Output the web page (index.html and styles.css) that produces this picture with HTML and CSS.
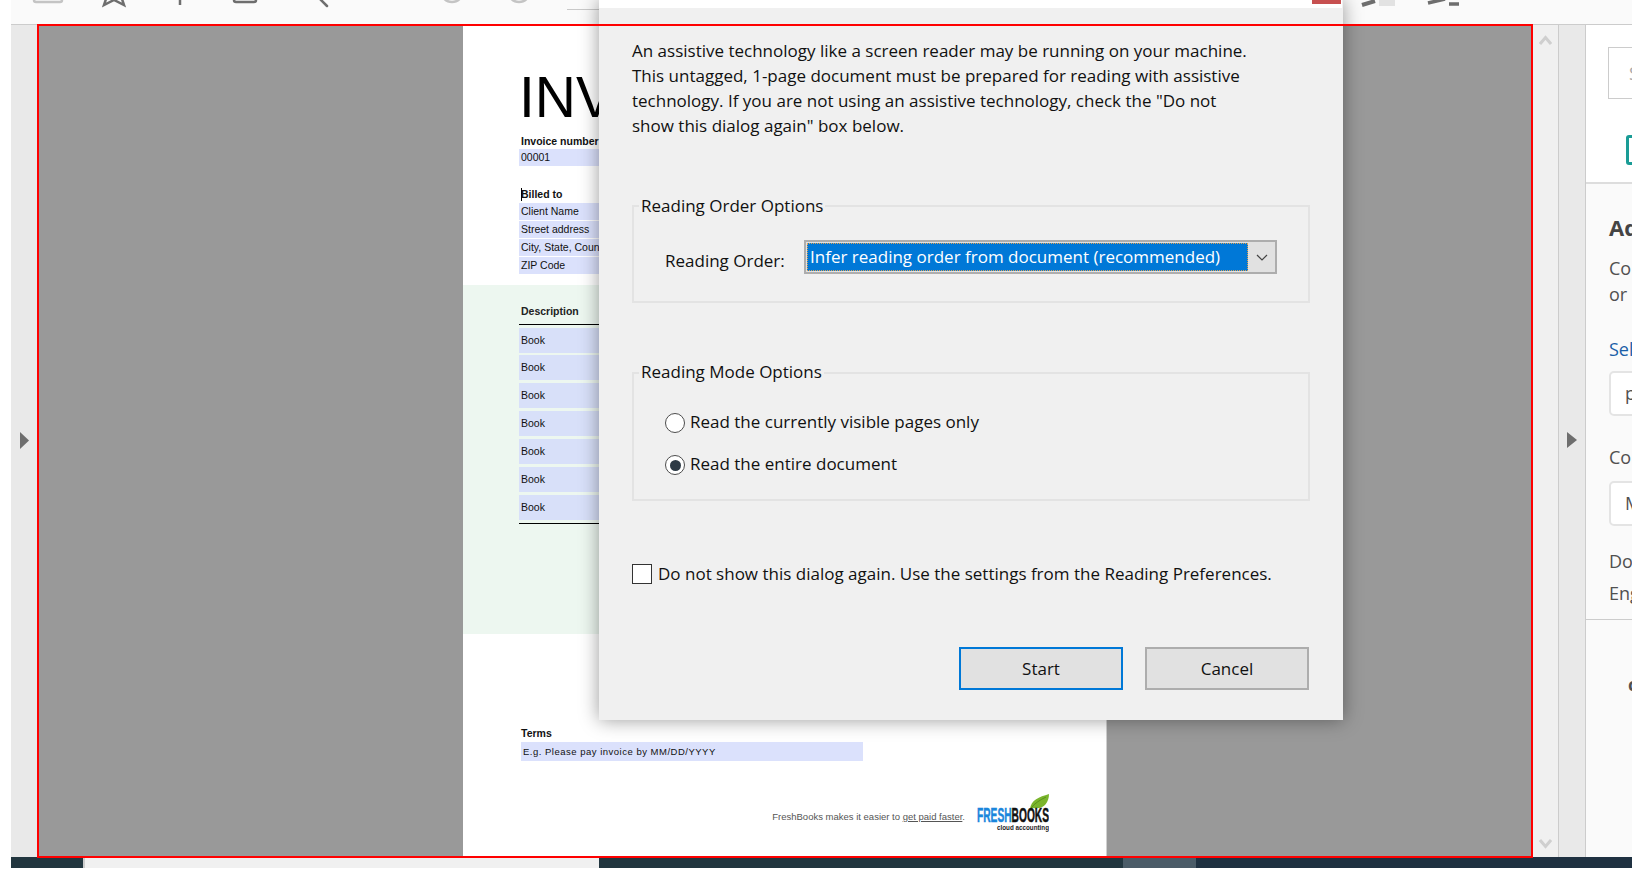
FILE: index.html
```html
<!DOCTYPE html>
<html lang="en">
<head>
<meta charset="UTF-8">
<meta name="viewport" content="width=device-width, initial-scale=1.0">
<title>Reading Untagged Document</title>
<link rel="stylesheet" href="styles.css">
</head>
<body>

<div class="app">
    <!-- only the bottom edge of the toolbar icons is on screen -->
    <div class="toolbar">
        <svg class="tools" width="1621" height="10" viewBox="0 0 1621 10" fill="none" stroke="#7a7a7a" stroke-width="2.5">
            <rect x="23" y="-8" width="28" height="10" rx="2" stroke="#c4c4c4"/>
            <path d="M98 -10 L93 5 L103 0 L113 5 L108 -10" stroke="#6e6e6e"/>
            <path d="M169 -4 V5" stroke="#6e6e6e"/>
            <rect x="223" y="-8" width="22" height="10" rx="2" stroke="#6e6e6e"/>
            <path d="M306 -4 L316 6" stroke="#6e6e6e" stroke-linecap="round"/>
            <circle cx="441" cy="-9" r="11" stroke="#c4c4c4"/>
            <circle cx="508" cy="-9" r="11" stroke="#c4c4c4"/>
            <path d="M556 9.5 H590" stroke="#c9c9c9" stroke-width="1"/>
            <path d="M1351 5 L1364 1" stroke="#6e6e6e" stroke-width="4"/>
            <rect x="1368" y="-4" width="16" height="10" fill="#e2e2e2" stroke="none"/>
            <path d="M1417 3 L1434 -1 M1438 4 L1448 4" stroke="#6e6e6e" stroke-width="3.5"/>
        </svg>
    </div>

    <div class="main">
        <div class="rail">
            <svg width="9" height="17" viewBox="0 0 9 17"><path d="M0 0 L9 8.5 L0 17 Z" fill="#6e6e6e"/></svg>
        </div>

        <div class="viewer">
            <div class="page">
                <h1 class="doc-title">INVOICE</h1>
                <div class="doc-label doc-label-first">Invoice number</div>
                <div class="field">00001</div>

                <div class="doc-label doc-label-billed"><span class="caret"></span>Billed to</div>
                <div class="field">Client Name</div>
                <div class="field">Street address</div>
                <div class="field">City, State, Country</div>
                <div class="field">ZIP Code</div>

                <div class="items">
                    <div class="items-head">Description</div>
                    <div class="items-rows">
                        <div class="item">Book</div>
                        <div class="item">Book</div>
                        <div class="item">Book</div>
                        <div class="item">Book</div>
                        <div class="item">Book</div>
                        <div class="item">Book</div>
                        <div class="item">Book</div>
                    </div>
                </div>

                <div class="doc-label doc-label-terms">Terms</div>
                <div class="terms">E.g. Please pay invoice by MM/DD/YYYY</div>

                <div class="doc-foot">
                    <span class="doc-foot-text">FreshBooks makes it easier to <u>get paid faster</u>.</span>
                    <svg class="logo" width="72" height="38" viewBox="0 0 72 38">
                        <path d="M53 15 C54 6 62 3 72 0 C72 9 66 16 56 14 C55 15 54 15 53 15 Z" fill="#7ab52c"/>
                        <path d="M54 14 C58 9 63 6 69 3" stroke="#4e7f16" stroke-width="0.7" fill="none"/>
                        <text x="0" y="28" font-family="Liberation Sans" font-weight="700" font-size="20" stroke-width="0.5" textLength="72" lengthAdjust="spacingAndGlyphs"><tspan fill="#1a86dc" stroke="#1a86dc">FRESH</tspan><tspan fill="#111" stroke="#111">BOOKS</tspan></text>
                        <text x="20" y="36" font-family="Liberation Sans" font-weight="700" font-size="8" fill="#222" textLength="52" lengthAdjust="spacingAndGlyphs">cloud accounting</text>
                    </svg>
                </div>
            </div>
        </div>

        <div class="scroll">
            <svg width="13" height="10" viewBox="0 0 13 10"><path d="M1 9 L6.5 2.5 L12 9" fill="none" stroke="#cfcfcf" stroke-width="3"/></svg>
            <svg width="13" height="10" viewBox="0 0 13 10"><path d="M1 1 L6.5 7.5 L12 1" fill="none" stroke="#cfcfcf" stroke-width="3"/></svg>
        </div>

        <div class="rail rail-right">
            <svg width="10" height="16" viewBox="0 0 10 16"><path d="M0 0 L10 8 L0 16 Z" fill="#6e6e6e"/></svg>
        </div>

        <div class="side">
            <div class="side-top">
                <div class="side-search">Search</div>
                <div class="side-tick"></div>
            </div>
            <div class="side-body">
                <h3 class="side-title">Add</h3>
                <p class="side-text">Co<br>or</p>
                <div class="side-link">Select</div>
                <div class="side-input">p</div>
                <div class="side-caption">Co</div>
                <div class="side-input">M</div>
                <p class="side-lang">Do<br>English</p>
            </div>
            <div class="side-foot">c</div>
        </div>
    </div>

    <div class="statusbar">
        <div class="seg seg-a"></div>
        <div class="seg seg-b"></div>
        <div class="seg seg-c"></div>
        <div class="seg seg-d"></div>
        <div class="seg seg-e"></div>
    </div>
</div>

<div class="dialog">
    <div class="dialog-title"><span class="dialog-close"></span></div>
    <p class="intro">An assistive technology like a screen reader may be running on your machine.<br>This untagged, 1-page document must be prepared for reading with assistive<br>technology. If you are not using an assistive technology, check the "Do not<br>show this dialog again" box below.</p>

    <div class="group group-order">
        <div class="legend">Reading Order Options</div>
        <div class="order-row">
            <label class="order-label">Reading Order:</label>
            <div class="select">
                <span class="select-value">Infer reading order from document (recommended)</span>
                <svg width="12" height="7" viewBox="0 0 12 7"><path d="M1 1 L6 6 L11 1" fill="none" stroke="#444" stroke-width="1.2"/></svg>
            </div>
        </div>
    </div>

    <div class="group group-mode">
        <div class="legend">Reading Mode Options</div>
        <label class="radio-row"><input type="radio" name="mode"> Read the currently visible pages only</label>
        <label class="radio-row"><input type="radio" name="mode" checked> Read the entire document</label>
    </div>

    <label class="check-row"><input type="checkbox"> Do not show this dialog again. Use the settings from the Reading Preferences.</label>

    <div class="buttons">
        <button class="btn btn-default">Start</button>
        <button class="btn">Cancel</button>
    </div>
</div>

<!-- red frame drawn on top of the screenshot -->
<div class="frame"></div>

</body>
</html>
```

FILE: styles.css
```css
html, body {
    height: 100%;
}
body {
    margin: 0;
    background: #fff;
    overflow: hidden;
    font-family: "Open Sans", sans-serif;
    color: #1a1a1a;
}
.app {
    margin-left: 11px;
    height: 868px;
    display: flex;
    flex-direction: column;
}

/* toolbar */
.toolbar {
    height: 24px;
    flex: none;
    background: #fafafa;
    border-bottom: 1px solid #cccccc;
}
.tools {
    display: block;
}

/* main row */
.main {
    flex: 1;
    display: flex;
    min-height: 0;
}
.rail {
    width: 26px;
    flex: none;
    background: #e9e9e9;
    display: flex;
    align-items: center;
    justify-content: center;
    padding-bottom: 2px;
    box-sizing: border-box;
}
.rail-right {
    width: 27px;
    border-right: 1px solid #cccccc;
}
.viewer {
    width: 1496px;
    flex: none;
    background: #999999;
    padding-left: 426px;
    box-sizing: border-box;
}
.scroll {
    width: 26px;
    flex: none;
    box-sizing: border-box;
    background: #f0f0f0;
    border-right: 1px solid #cccccc;
    padding: 10px 0 8px;
    display: flex;
    flex-direction: column;
    align-items: center;
    justify-content: space-between;
}

/* invoice page */
.page {
    width: 644px;
    height: 832px;
    background: #fff;
    padding: 44px 0 0 56px;
    box-sizing: border-box;
    font-family: "Liberation Sans", Arial, sans-serif;
    color: #111;
    border-right: 1px solid #d0d0d0;
}
.doc-title {
    margin: 0;
    font-size: 57px;
    line-height: 57px;
    font-weight: 400;
    color: #000;
}
.doc-label {
    font-size: 10.5px;
    font-weight: 700;
    line-height: 16px;
    padding-left: 2px;
}
.doc-label-first {
    margin-top: 7px;
}
.doc-label-billed {
    margin-top: 20px;
    height: 17px;
    line-height: 17px;
}
.caret {
    display: inline-block;
    width: 1px;
    height: 13px;
    margin-right: -1px;
    background: #000;
    vertical-align: -3px;
}
.field {
    width: 344px;
    height: 17px;
    margin-bottom: 1px;
    padding-left: 2px;
    box-sizing: border-box;
    background: #dbe1fc;
    font-size: 10.5px;
    line-height: 17px;
}
.items {
    margin: 11px 0 0 -56px;
    padding: 18px 0 0 56px;
    height: 349px;
    box-sizing: border-box;
    background: #edf7f0;
}
.items-head {
    width: 344px;
    height: 22px;
    padding-left: 2px;
    box-sizing: border-box;
    border-bottom: 1px solid #000;
    font-size: 10.5px;
    font-weight: 700;
    line-height: 16px;
    color: #222;
}
.items-rows {
    width: 344px;
    display: flex;
    flex-direction: column;
    gap: 3px;
    padding: 3px 0;
    border-bottom: 1px solid #000;
}
.item {
    height: 25px;
    padding-left: 2px;
    box-sizing: border-box;
    background: #d8e0f9;
    font-size: 10.5px;
    line-height: 25px;
}
.item:first-child {
    margin-bottom: -1px;
}
.doc-label-terms {
    margin-top: 91px;
}
.terms {
    width: 342px;
    height: 19px;
    margin: 1px 0 0 2px;
    padding-left: 2px;
    box-sizing: border-box;
    background: #dbe1fc;
    font-size: 9.5px;
    line-height: 19px;
    letter-spacing: 0.5px;
}
.doc-foot {
    margin: 33px 57px 0 0;
    display: flex;
    justify-content: flex-end;
    align-items: flex-start;
    gap: 12px;
}
.doc-foot-text {
    margin-top: 17px;
    font-size: 9.5px;
    line-height: 12px;
    color: #555;
}
.logo {
    display: block;
}

/* right hand panel, cut off by the window */
.side {
    flex: 1;
    min-width: 0;
    background: #fafafa;
    overflow: hidden;
    white-space: nowrap;
    color: #505050;
    font-size: 18px;
}
.side-top {
    height: 159px;
    padding: 22px 0 0 22px;
    box-sizing: border-box;
    background: #fff;
    border-bottom: 2px solid #dddddd;
}
.side-search {
    height: 52px;
    width: 200px;
    box-sizing: border-box;
    border: 1px solid #cccccc;
    padding-left: 20px;
    line-height: 50px;
    color: #aaa;
}
.side-tick {
    width: 200px;
    height: 30px;
    margin: 36px 0 0 18px;
    box-sizing: border-box;
    border: 3px solid #1a9c96;
    border-radius: 3px;
}
.side-body {
    height: 436px;
    padding: 29px 0 0 23px;
    box-sizing: border-box;
    border-bottom: 1px solid #cccccc;
}
.side-title {
    margin: 0;
    font-size: 22px;
    line-height: 28px;
    font-weight: 700;
    color: #444;
}
.side-text {
    margin: 14px 0 0;
    line-height: 26px;
}
.side-link {
    margin-top: 29px;
    line-height: 26px;
    color: #1a5fa8;
}
.side-input {
    width: 200px;
    height: 45px;
    margin-top: 9px;
    padding-left: 14px;
    box-sizing: border-box;
    border: 2px solid #e4e4e4;
    border-radius: 5px;
    background: #fff;
    line-height: 41px;
}
.side-caption {
    margin-top: 28px;
    line-height: 26px;
}
.side-caption + .side-input {
    margin-top: 11px;
}
.side-lang {
    margin: 19px 0 0;
    line-height: 32px;
}
.side-foot {
    padding: 52px 0 0 42px;
    font-weight: 700;
    line-height: 24px;
}

/* bottom strip */
.statusbar {
    height: 11px;
    flex: none;
    display: flex;
}
.seg-a {
    width: 72px;
    background: #22363f;
}
.seg-b {
    width: 516px;
    background: #f0f0f0;
    border-left: 2px solid #cccccc;
    box-sizing: border-box;
}
.seg-c {
    width: 524px;
    background: #22363f;
}
.seg-d {
    width: 73px;
    background: #4b5c68;
}
.seg-e {
    flex: 1;
    background: #1f3141;
}

/* dialog over the page */
.dialog {
    position: absolute;
    left: 599px;
    top: 0;
    width: 744px;
    height: 720px;
    padding: 0 33px;
    box-sizing: border-box;
    background: #f0f0f0;
    box-shadow: 0 0 18px rgba(0, 0, 0, 0.4);
    font-size: 17px;
    line-height: 25px;
    color: #111;
}
.dialog-title {
    height: 8px;
    margin: 0 -32px 0 -33px;
    background: #fff;
    display: flex;
    justify-content: flex-end;
    padding-right: 1px;
    box-sizing: border-box;
}
.dialog-close {
    width: 29px;
    height: 4px;
    background: #c75050;
}
.intro {
    margin: 30px 0 0;
    white-space: nowrap;
}
.group {
    width: 678px;
    box-sizing: border-box;
    border: 2px solid #e3e3e3;
}
.group-order {
    height: 98px;
    margin-top: 67px;
    padding-left: 31px;
}
.group-mode {
    height: 129px;
    margin-top: 69px;
    padding-left: 31px;
}
.legend {
    display: table;
    margin: -14px 0 0 -26px;
    padding: 0 2px;
    background: #f0f0f0;
}
.group-mode .legend {
    margin-top: -15px;
}
.order-row {
    margin-top: 22px;
    display: flex;
    align-items: center;
    gap: 20px;
}
.order-label {
    flex: none;
    width: 119px;
    padding-top: 6px;
    white-space: nowrap;
}
.select {
    flex: none;
    width: 473px;
    height: 34px;
    padding: 1px 7px 1px 1px;
    box-sizing: border-box;
    border: 2px solid #adadad;
    background: #e1e1e1;
    display: flex;
    align-items: center;
    justify-content: space-between;
}
.select-value {
    width: 441px;
    height: 28px;
    padding-left: 3px;
    box-sizing: border-box;
    background: #0078d7;
    outline: 1px dotted #e0a050;
    outline-offset: -1px;
    color: #fff;
    line-height: 28px;
    white-space: nowrap;
}
.radio-row {
    display: flex;
    align-items: flex-start;
    gap: 5px;
    height: 20px;
    margin-top: 22px;
    line-height: 18px;
}
.legend + .radio-row {
    margin-top: 29px;
}
.radio-row input {
    appearance: none;
    width: 20px;
    height: 20px;
    margin: 0;
    border: 1.5px solid #4d4d4d;
    border-radius: 50%;
    background: #fff;
    display: flex;
    align-items: center;
    justify-content: center;
}
.radio-row input:checked::after {
    content: "";
    width: 11px;
    height: 11px;
    border-radius: 50%;
    background: #2d3a45;
}
.check-row {
    display: flex;
    align-items: flex-start;
    gap: 6px;
    height: 20px;
    margin-top: 63px;
    line-height: 20px;
    white-space: nowrap;
}
.check-row input {
    appearance: none;
    width: 20px;
    height: 20px;
    margin: 0;
    border: 1.5px solid #333;
    background: #fff;
}
.buttons {
    margin: 63px 1px 0 0;
    display: flex;
    justify-content: flex-end;
    gap: 22px;
}
.btn {
    width: 164px;
    height: 43px;
    padding: 0;
    border: 2px solid #adadad;
    background: #e1e1e1;
    font: inherit;
    color: #111;
}
.btn-default {
    border-color: #0078d7;
}

.frame {
    position: absolute;
    left: 37px;
    top: 24px;
    width: 1496px;
    height: 834px;
    box-sizing: border-box;
    border: 2px solid #ff0000;
    pointer-events: none;
}
```
